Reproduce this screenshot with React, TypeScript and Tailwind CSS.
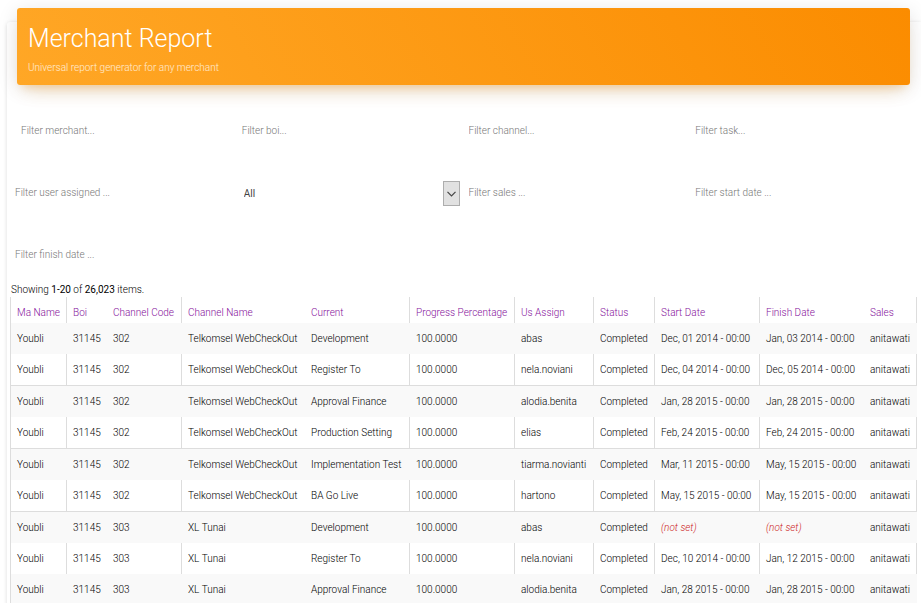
import React from "react";

const columns = [
  { title: "Ma Name", width: "w-[56px]", line: true },
  { title: "Boi", width: "w-[40px]", line: false },
  { title: "Channel Code", width: "w-[75px]", line: true },
  { title: "Channel Name", width: "w-[123px]", line: false },
  { title: "Current", width: "w-[105px]", line: true },
  { title: "Progress Percentage", width: "w-[105px]", line: true },
  { title: "Us Assign", width: "w-[79px]", line: true },
  { title: "Status", width: "w-[61px]", line: true },
  { title: "Start Date", width: "w-[105px]", line: true },
  { title: "Finish Date", width: "w-[104px]", line: false },
  { title: "Sales", width: "w-[53px]", line: true },
];

const telkomsel = ["302", "Telkomsel WebCheckOut"];
const tunai = ["303", "XL Tunai"];

const rows: (string | null)[][] = [
  [...telkomsel, "Development", "abas", "Dec, 01 2014 - 00:00", "Jan, 03 2014 - 00:00"],
  [...telkomsel, "Register To", "nela.noviani", "Dec, 04 2014 - 00:00", "Dec, 05 2014 - 00:00"],
  [...telkomsel, "Approval Finance", "alodia.benita", "Jan, 28 2015 - 00:00", "Jan, 28 2015 - 00:00"],
  [...telkomsel, "Production Setting", "elias", "Feb, 24 2015 - 00:00", "Feb, 24 2015 - 00:00"],
  [...telkomsel, "Implementation Test", "tiarma.novianti", "Mar, 11 2015 - 00:00", "May, 15 2015 - 00:00"],
  [...telkomsel, "BA Go Live", "hartono", "May, 15 2015 - 00:00", "May, 15 2015 - 00:00"],
  [...tunai, "Development", "abas", null, null],
  [...tunai, "Register To", "nela.noviani", "Dec, 10 2014 - 00:00", "Jan, 12 2015 - 00:00"],
  [...tunai, "Approval Finance", "alodia.benita", "Jan, 28 2015 - 00:00", "Jan, 28 2015 - 00:00"],
].map(([code, channel, current, user, start, finish]) => [
  "Youbli", "31145", code, channel, current, "100.0000", user, "Completed", start, finish, "anitawati",
]);

function Filter({ label, inset = false }: { label: string; inset?: boolean }) {
  return (
    <input
      type="text"
      aria-label={label}
      placeholder={label}
      className={`h-[62px] w-full min-w-0 bg-transparent text-[10px] outline-none placeholder:text-[#777] ${inset ? "pl-[11px]" : "pl-[5px]"}`}
    />
  );
}

function StatusSelect() {
  return (
    <div className="relative mr-1 flex h-[62px] items-center pt-[3px]">
      <select
        aria-label="Status"
        className="h-[25px] w-full appearance-none bg-transparent pl-[7px] text-[10px] font-normal text-[#444] outline-none"
      >
        <option>All</option>
      </select>
      <span className="pointer-events-none absolute right-0 flex h-[25px] w-[17px] items-center justify-center border border-[#adadad] bg-[#e1e1e1]">
        <svg width="9" height="6" viewBox="0 0 9 6" fill="none" stroke="#444" strokeWidth="1.2">
          <path d="M0.5 0.8 4.5 4.8 8.5 0.8" />
        </svg>
      </span>
    </div>
  );
}

export default function App() {
  return (
    <div className="h-screen overflow-hidden bg-white pl-[7px] pt-[22px] font-[Roboto,sans-serif] text-[10px] font-light text-black">
      <main className="flow-root rounded-tl-[3px] pl-[3px] pr-1 shadow-[0_1px_4px_0_rgba(0,0,0,0.14)]">
        <header className="relative mx-[7px] -mt-[14px] h-[77px] rounded-[3px] bg-[linear-gradient(60deg,#ffa726,#fb8c00)] px-[11px] pt-4 text-white shadow-[0_12px_20px_-10px_rgba(255,152,0,0.28),0_4px_20px_0_rgba(0,0,0,0.12),0_7px_8px_-5px_rgba(255,152,0,0.2)]">
          <h1 className="text-[25px] font-light leading-[30px]">Merchant Report</h1>
          <p className="mt-[7px] leading-[14px] text-white/80">Universal report generator for any merchant</p>
        </header>
        <form className="mt-[14px] grid grid-cols-4" onSubmit={(e) => e.preventDefault()}>
          <Filter label="Filter merchant..." inset />
          <Filter label="Filter boi..." />
          <Filter label="Filter channel..." />
          <Filter label="Filter task..." />
          <Filter label="Filter user assigned ..." />
          <StatusSelect />
          <Filter label="Filter sales ..." />
          <Filter label="Filter start date ..." />
          <Filter label="Filter finish date ..." />
        </form>
        <p className="h-3 pl-px leading-[10px]">
          Showing <b>1-20</b> of <b>26,023</b> items.
        </p>
        <table className="w-full table-fixed border-separate border-spacing-0 border-l border-[#ddd] text-left">
          <colgroup>
            {columns.map((c) => (
              <col key={c.title} className={c.width} />
            ))}
          </colgroup>
          <thead>
            <tr className="h-[26px]">
              {columns.map((c) => (
                <th
                  key={c.title}
                  className={`whitespace-nowrap p-0 pl-[6px] pt-[5px] font-light leading-[14px] ${c.line ? "border-r border-[#ddd]" : ""}`}
                >
                  <a href="#" className="text-[#85109b]">{c.title}</a>
                </th>
              ))}
            </tr>
          </thead>
          <tbody>
            {rows.map((row, r) => {
              const ruled = r % 2 === 1 && r < 7;
              return (
                <tr key={r} className={`group odd:bg-[#f9f9f9] ${ruled ? "h-8" : "h-[31px]"}`}>
                  {row.map((cell, i) => (
                    <td
                      key={i}
                      className={`whitespace-nowrap border-[#ddd] p-0 pl-[6px] pt-px leading-[14px] ${columns[i].line ? "group-even:border-r" : ""} ${ruled ? "border-b" : ""}`}
                    >
                      {cell ?? <em className="text-[#c22]">(not set)</em>}
                    </td>
                  ))}
                </tr>
              );
            })}
          </tbody>
        </table>
      </main>
    </div>
  );
}
